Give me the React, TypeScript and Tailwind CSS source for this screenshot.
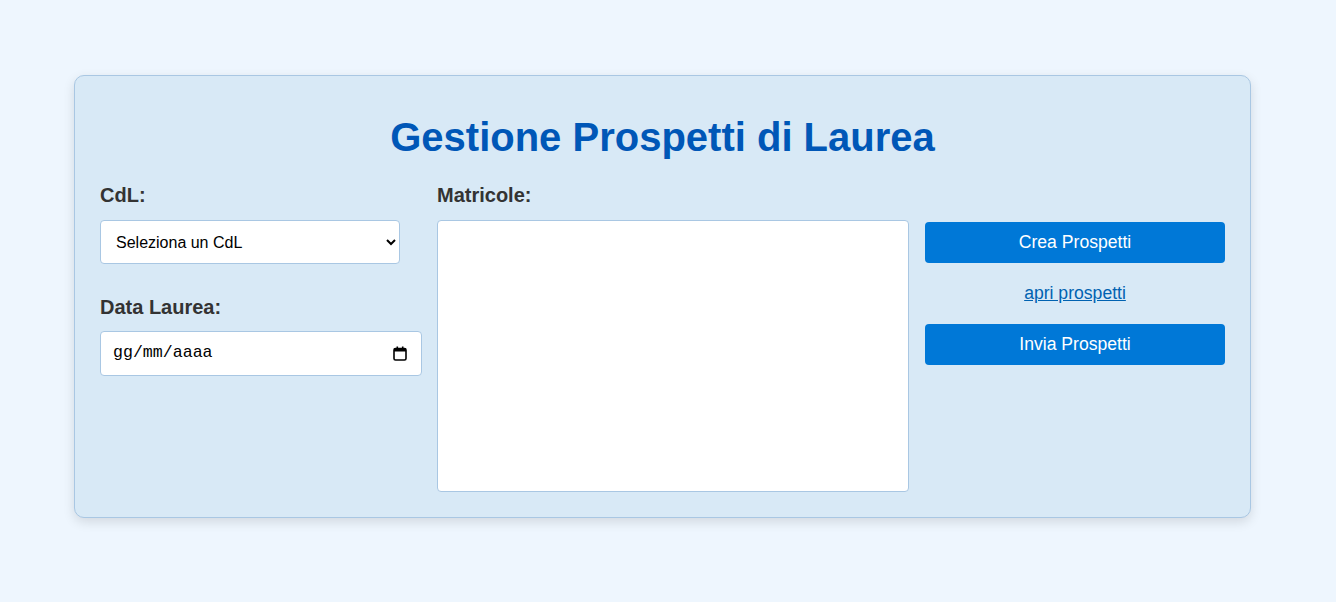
export default function App() {
    return (
        <main className="min-h-screen w-full bg-[#eef6fe] pt-[75px] pl-[74px] font-['Liberation_Sans',Arial,sans-serif]">
            <div className="w-[1177px] rounded-[10px] border border-[#a9c7e3] bg-[#d8e9f6] px-[25px] pb-[25px] pt-[38px] shadow-[0_4px_12px_rgba(0,0,0,0.12)]">
                <h1 className="text-center text-[40px] font-bold leading-[46px] text-[#0057b7]">
                    Gestione Prospetti di Laurea
                </h1>

                <div className="mt-[24px] flex">
                    {/* CdL + data */}
                    <div className="flex w-[322px] flex-col">
                        <label className="text-[20px] font-bold leading-[23px] text-[#333]">CdL:</label>
                        <select className="mt-[13px] h-[44px] w-[300px] rounded-[4px] border border-[#a9c7e3] bg-white pl-[11px] pr-[8px] text-[16px] text-black outline-none font-['Liberation_Sans',Arial,sans-serif]">
                            <option>Seleziona un CdL</option>
                        </select>

                        <label className="mt-[32px] text-[20px] font-bold leading-[23px] text-[#333]">Data Laurea:</label>
                        <div className="mt-[12px] flex h-[45px] w-[322px] items-center justify-between rounded-[4px] border border-[#a9c7e3] bg-white pl-[12px] pr-[14px]">
                            <span className="font-['Liberation_Mono',monospace] text-[16.6px] text-black">gg/mm/aaaa</span>
                            <svg width="14" height="15" viewBox="0 0 14 15" fill="none">
                                <rect x="1" y="2.5" width="12" height="11.5" rx="1.5" stroke="#000" strokeWidth="1.6" />
                                <rect x="1" y="2.5" width="12" height="3" fill="#000" />
                                <rect x="3.5" y="0.5" width="1.6" height="3" fill="#000" />
                                <rect x="8.9" y="0.5" width="1.6" height="3" fill="#000" />
                            </svg>
                        </div>
                    </div>

                    {/* Matricole */}
                    <div className="ml-[15px] flex w-[472px] flex-col">
                        <label className="text-[20px] font-bold leading-[23px] text-[#333]">Matricole:</label>
                        <textarea className="mt-[13px] h-[272px] w-[472px] resize-none rounded-[4px] border border-[#a9c7e3] bg-white outline-none" />
                    </div>

                    {/* Azioni */}
                    <div className="ml-[16px] flex w-[300px] flex-col items-center pt-[38px]">
                        <button className="h-[41px] w-[300px] rounded-[4px] bg-[#0078d7] text-[17.6px] text-white">
                            Crea Prospetti
                        </button>
                        <a href="#" className="mt-[20px] text-[17.6px] leading-[20px] text-[#0062b1] underline">
                            apri prospetti
                        </a>
                        <button className="mt-[21px] h-[41px] w-[300px] rounded-[4px] bg-[#0078d7] text-[17.6px] text-white">
                            Invia Prospetti
                        </button>
                    </div>
                </div>
            </div>
        </main>
    );
}
